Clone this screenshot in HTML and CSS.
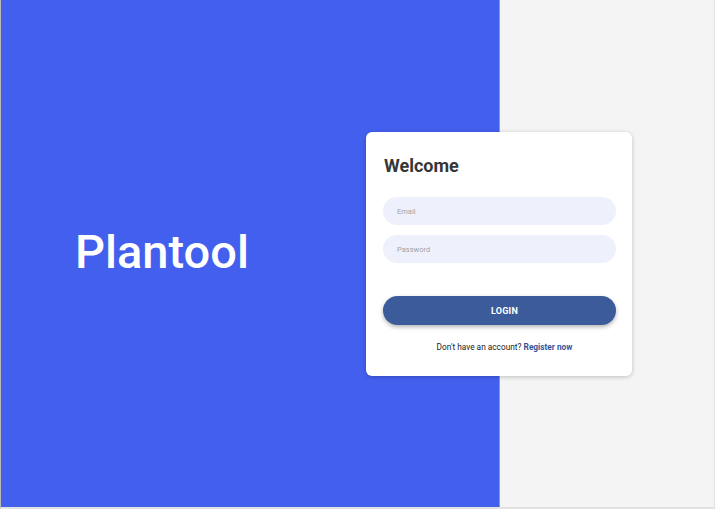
FILE: index.html
```html
<!DOCTYPE html>
<html lang="en">
<head>
<meta charset="utf-8">
<title>Plantool</title>
<link rel="stylesheet" href="styles.css">
</head>
<body>
<div class="frame">
  <section class="brand-panel">
    <h1 class="brand">Plantool</h1>
  </section>
  <section class="side-panel"></section>
  <form class="card">
    <h2 class="card-title">Welcome</h2>
    <input class="field" type="email" placeholder="Email">
    <input class="field" type="password" placeholder="Password">
    <button class="login" type="button">LOGIN</button>
    <p class="footer">Don't have an account? <a class="register" href="#">Register now</a></p>
  </form>
</div>
</body>
</html>
```
FILE: styles.css
```css
* { box-sizing: border-box; }
html, body {
  margin: 0;
  padding: 0;
  background: #e2e2e2;
  font-family: Roboto, "Liberation Sans", sans-serif;
}
.frame {
  position: relative;
  display: flex;
  width: 715px;
  height: 509px;
  border-left: 1px solid #b9b9b9;
  border-right: 1px solid #e2e2e2;
  border-bottom: 2px solid #e2e2e2;
}
.brand-panel {
  width: 499px;
  background: #435fee;
  border-right: 1px solid #8196f3;
  display: flex;
  align-items: center;
  padding-left: 74px;
}
.brand {
  margin: 0 0 4px 0;
  color: #ffffff;
  font-size: 47px;
  font-weight: 500;
  letter-spacing: 0;
}
.side-panel {
  flex: 1;
  background: #f4f4f4;
}
.card {
  position: absolute;
  left: 365px;
  top: 132px;
  width: 266px;
  background: #ffffff;
  border-radius: 6px;
  box-shadow: 0 1px 4px rgba(0,0,0,0.22);
  padding: 23px 16px 24px 17px;
  display: flex;
  flex-direction: column;
}
.card-title {
  margin: 0 0 21px 1px;
  font-size: 18px;
  font-weight: 700;
  color: #363636;
  line-height: 21px;
}
.field {
  height: 28px;
  border: none;
  border-radius: 14px;
  background: #eef1fc;
  padding: 0 14px;
  font-family: Roboto, "Liberation Sans", sans-serif;
  font-size: 7.5px;
  color: #555;
  outline: none;
}
.field + .field { margin-top: 10px; }
.field::placeholder { color: #a2a2a6; }
.login {
  margin-top: 33px;
  height: 29px;
  border: none;
  border-radius: 15px;
  background: #3c5b9a;
  color: #ffffff;
  font-family: Roboto, "Liberation Sans", sans-serif;
  font-size: 9px;
  font-weight: 700;
  letter-spacing: 0.2px;
  padding: 0 0 0 10px;
  box-shadow: 0 2px 4px rgba(0,0,0,0.3);
}
.footer {
  margin: 17px 0 0 0;
  padding-left: 10px;
  text-align: center;
  font-size: 8.3px;
  font-weight: 400;
  color: #222222;
  line-height: 10px;
}
.register {
  color: #34559b;
  font-weight: 700;
  text-decoration: none;
}
```
